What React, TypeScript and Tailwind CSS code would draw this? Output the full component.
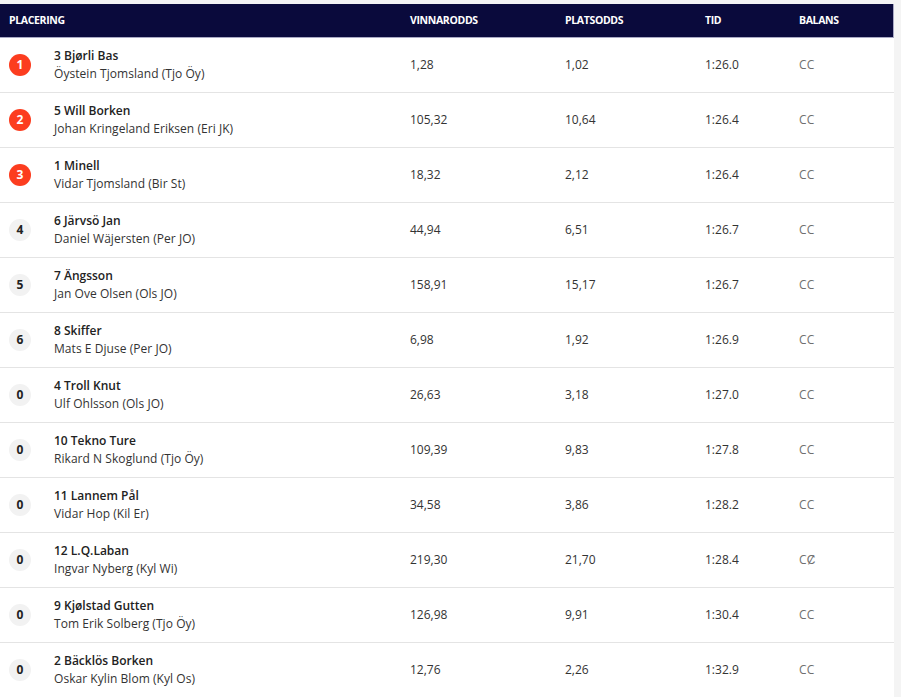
const rows = [
  { place: 1, horse: "3 Bjørli Bas", driver: "Öystein Tjomsland (Tjo Öy)", win: "1,28", plats: "1,02", tid: "1:26.0", balans: "CC" },
  { place: 2, horse: "5 Will Borken", driver: "Johan Kringeland Eriksen (Eri JK)", win: "105,32", plats: "10,64", tid: "1:26.4", balans: "CC" },
  { place: 3, horse: "1 Minell", driver: "Vidar Tjomsland (Bir St)", win: "18,32", plats: "2,12", tid: "1:26.4", balans: "CC" },
  { place: 4, horse: "6 Järvsö Jan", driver: "Daniel Wäjersten (Per JO)", win: "44,94", plats: "6,51", tid: "1:26.7", balans: "CC" },
  { place: 5, horse: "7 Ängsson", driver: "Jan Ove Olsen (Ols JO)", win: "158,91", plats: "15,17", tid: "1:26.7", balans: "CC" },
  { place: 6, horse: "8 Skiffer", driver: "Mats E Djuse (Per JO)", win: "6,98", plats: "1,92", tid: "1:26.9", balans: "CC" },
  { place: 0, horse: "4 Troll Knut", driver: "Ulf Ohlsson (Ols JO)", win: "26,63", plats: "3,18", tid: "1:27.0", balans: "CC" },
  { place: 0, horse: "10 Tekno Ture", driver: "Rikard N Skoglund (Tjo Öy)", win: "109,39", plats: "9,83", tid: "1:27.8", balans: "CC" },
  { place: 0, horse: "11 Lannem Pål", driver: "Vidar Hop (Kil Er)", win: "34,58", plats: "3,86", tid: "1:28.2", balans: "CC" },
  { place: 0, horse: "12 L.Q.Laban", driver: "Ingvar Nyberg (Kyl Wi)", win: "219,30", plats: "21,70", tid: "1:28.4", balans: "CȻ" },
  { place: 0, horse: "9 Kjølstad Gutten", driver: "Tom Erik Solberg (Tjo Öy)", win: "126,98", plats: "9,91", tid: "1:30.4", balans: "CC" },
  { place: 0, horse: "2 Bäcklös Borken", driver: "Oskar Kylin Blom (Kyl Os)", win: "12,76", plats: "2,26", tid: "1:32.9", balans: "CC" },
];

const cols = "grid grid-cols-[410px_155px_140px_94px_1fr]";

export default function App() {
  return (
    <div className="min-h-[697px] bg-[#f4f4f4] pt-1 font-['Open_Sans',sans-serif] text-[#333]">
      <div className="w-[894px] bg-white">
        <div className={`${cols} h-[34px] items-center bg-[#0a0a3c] border-b border-r border-[#a9a9c4] text-[10.5px] font-bold uppercase tracking-[-0.35px] text-white`}>
          <div className="pl-[9px]">Placering</div>
          <div>Vinnarodds</div>
          <div>Platsodds</div>
          <div>Tid</div>
          <div>Balans</div>
        </div>
        {rows.map((r, i) => (
          <div key={i} className={`${cols} h-[55px] items-center border-b border-[#e4e4e4] text-[12px]`}>
            <div className="flex items-center pl-[9px]">
              <span
                className={`flex h-[22px] w-[22px] items-center justify-center rounded-full text-[12px] font-bold ${
                  r.place >= 1 && r.place <= 3 ? "bg-[#fc3d1f] text-white" : "bg-[#f2f2f2] text-[#222]"
                }`}
              >
                {r.place}
              </span>
              <div className="ml-[23px] flex flex-col leading-[18px]">
                <span className="font-semibold text-[#222]">{r.horse}</span>
                <span className="tracking-[0.05px]">{r.driver}</span>
              </div>
            </div>
            <div>{r.win}</div>
            <div>{r.plats}</div>
            <div>{r.tid}</div>
            <div className="text-[12px] tracking-[0.3px] text-[#6f6f6f]">{r.balans}</div>
          </div>
        ))}
      </div>
    </div>
  );
}
